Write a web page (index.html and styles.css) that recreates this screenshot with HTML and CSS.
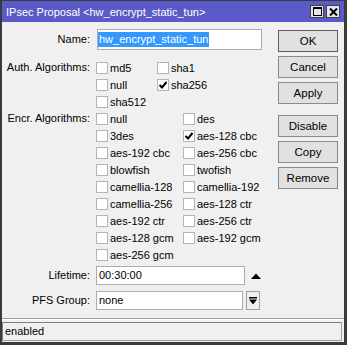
FILE: index.html
```html
<!DOCTYPE html>
<html>
<head>
<meta charset="utf-8">
<link rel="stylesheet" href="styles.css">
</head>
<body>
<div class="window">
  <div class="titlebar">
    <span class="title">IPsec Proposal &lt;hw_encrypt_static_tun&gt;</span>
    <div class="tbtns">
      <span class="tbtn"><svg width="9" height="9" viewBox="0 0 9 9"><rect x="0.5" y="0.5" width="8" height="8" fill="none" stroke="#000"/><rect x="0" y="0" width="9" height="2" fill="#000"/></svg></span>
      <span class="tbtn"><svg width="9" height="8" viewBox="0 0 9 8"><path d="M1 0.5 L8 7.5 M8 0.5 L1 7.5" stroke="#000" stroke-width="2"/></svg></span>
    </div>
  </div>
  <div class="main">
    <div class="form">
      <div class="row name-row">
        <span class="lbl">Name:</span>
        <div class="input name"><span class="sel">hw_encrypt_static_tun</span></div>
      </div>
      <div class="row chk-row auth-row">
        <span class="lbl">Auth. Algorithms:</span>
        <div class="checks auth">
          <div class="cb"><span class="box"></span>md5</div>
          <div class="cb"><span class="box"></span>sha1</div>
          <div class="cb"><span class="box"></span>null</div>
          <div class="cb"><span class="box"><svg width="10" height="10" viewBox="0 0 10 10"><path d="M1.5 5 L4 7.5 L8.5 2" fill="none" stroke="#000" stroke-width="2"/></svg></span>sha256</div>
          <div class="cb"><span class="box"></span>sha512</div>
        </div>
      </div>
      <div class="row chk-row">
        <span class="lbl">Encr. Algorithms:</span>
        <div class="checks encr">
          <div class="cb"><span class="box"></span>null</div>
          <div class="cb"><span class="box"></span>des</div>
          <div class="cb"><span class="box"></span>3des</div>
          <div class="cb"><span class="box"><svg width="10" height="10" viewBox="0 0 10 10"><path d="M1.5 5 L4 7.5 L8.5 2" fill="none" stroke="#000" stroke-width="2"/></svg></span>aes-128 cbc</div>
          <div class="cb"><span class="box"></span>aes-192 cbc</div>
          <div class="cb"><span class="box"></span>aes-256 cbc</div>
          <div class="cb"><span class="box"></span>blowfish</div>
          <div class="cb"><span class="box"></span>twofish</div>
          <div class="cb"><span class="box"></span>camellia-128</div>
          <div class="cb"><span class="box"></span>camellia-192</div>
          <div class="cb"><span class="box"></span>camellia-256</div>
          <div class="cb"><span class="box"></span>aes-128 ctr</div>
          <div class="cb"><span class="box"></span>aes-192 ctr</div>
          <div class="cb"><span class="box"></span>aes-256 ctr</div>
          <div class="cb"><span class="box"></span>aes-128 gcm</div>
          <div class="cb"><span class="box"></span>aes-192 gcm</div>
          <div class="cb"><span class="box"></span>aes-256 gcm</div>
        </div>
      </div>
      <div class="row field-row lifetime-row">
        <span class="lbl">Lifetime:</span>
        <div class="field">
          <div class="input lifetime">00:30:00</div>
          <svg class="up" width="10" height="6" viewBox="0 0 10 6"><path d="M0 6 L5 0.5 L10 6 Z" fill="#000"/></svg>
        </div>
      </div>
      <div class="row field-row pfs-row">
        <span class="lbl">PFS Group:</span>
        <div class="field">
          <div class="input pfs">none</div>
          <span class="dd"><svg width="8" height="8" viewBox="0 0 8 8"><rect x="0" y="0" width="8" height="1.5" fill="#000"/><path d="M0 2.5 L8 2.5 L4 7.5 Z" fill="#000"/></svg></span>
        </div>
      </div>
    </div>
    <div class="buttons">
      <div class="btn ok">OK</div>
      <div class="btn">Cancel</div>
      <div class="btn">Apply</div>
      <div class="btn group">Disable</div>
      <div class="btn">Copy</div>
      <div class="btn">Remove</div>
    </div>
  </div>
  <div class="sep"></div>
  <div class="status">enabled</div>
</div>
</body>
</html>
```

FILE: styles.css
```css
* { box-sizing: border-box; }
html, body { margin: 0; padding: 0; }
body {
  width: 347px;
  height: 345px;
  background: #fff;
  font-family: "Liberation Sans", Arial, sans-serif;
  font-size: 11px;
  color: #000;
}
.window {
  width: 347px;
  height: 345px;
  display: flex;
  flex-direction: column;
  background: #f0f0f0;
  border: 1px solid #3a3a3a;
  border-left-width: 2px;
  border-right-width: 3px;
  border-bottom-width: 3px;
}
.titlebar {
  height: 21px;
  flex: none;
  background: #5a5bc9;
  display: flex;
  align-items: center;
  padding-left: 4px;
  color: #fff;
  font-size: 11px;
}
.title { flex: 1; white-space: nowrap; }
.tbtns { display: flex; gap: 2px; margin-right: 4px; }
.tbtn {
  width: 14px;
  height: 13px;
  background: #e6e6e6;
  border: 1px solid #404040;
  display: flex;
  align-items: center;
  justify-content: center;
}
.main {
  flex: 1;
  display: flex;
  padding-top: 7px;
}
.form { flex: 1; }
.row {
  display: grid;
  grid-template-columns: 88px auto;
  column-gap: 6px;
  align-items: start;
}
.lbl { text-align: right; white-space: nowrap; }
.name-row .lbl { line-height: 21px; }
.input {
  background: #fff;
  border: 1px solid #abadb3;
  white-space: nowrap;
}
.name {
  margin-left: 1px;
  width: 165px;
  height: 21px;
  display: flex;
  align-items: center;
  padding-left: 0;
}
.sel {
  background: #3399ff;
  color: #fff;
  line-height: 15px;
  padding: 0 1px;
}
.auth-row { margin-top: 9px; }
.chk-row .lbl { line-height: 17px; }
.checks { display: grid; }
.auth { grid-template-columns: 61px auto; }
.encr { grid-template-columns: 87px auto; }
.cb {
  height: 17px;
  display: flex;
  align-items: center;
  gap: 2px;
  white-space: nowrap;
}
.box {
  width: 12px;
  height: 12px;
  background: #fff;
  border: 1px solid #b4b4b4;
  display: flex;
  align-items: center;
  justify-content: center;
  flex: none;
}
.field-row .lbl { line-height: 19px; }
.lifetime-row { margin-top: 3px; }
.pfs-row { margin-top: 6px; }
.field { display: flex; align-items: center; }
.lifetime, .pfs {
  height: 19px;
  line-height: 17px;
  padding-left: 2px;
}
.lifetime { width: 149px; }
.pfs { width: 147px; }
.up { margin-left: 6px; }
.dd {
  width: 14px;
  height: 19px;
  margin-left: 3px;
  border: 1px solid #a0a0a0;
  background: #f0f0f0;
  display: flex;
  align-items: center;
  justify-content: center;
}
.buttons {
  width: 60px;
  margin-right: 6px;
  display: flex;
  flex-direction: column;
  padding-top: 1px;
}
.btn {
  height: 22px;
  margin-bottom: 4px;
  background: #e1e1e1;
  border: 1px solid #8a8a8a;
  display: flex;
  align-items: center;
  justify-content: center;
  font-size: 11.5px;
}
.btn.ok { border-color: #5c5c5c; }
.btn.group { margin-top: 7px; }
.sep {
  height: 2px;
  flex: none;
  border-top: 1px solid #a0a0a0;
  border-bottom: 1px solid #fff;
}
.status {
  flex: none;
  height: 19px;
  margin: 2px 2px 1px 0;
  border: 1px solid #a0a0a0;
  border-top-color: #808080;
  border-left-color: #808080;
  line-height: 17px;
  padding-left: 2px;
}
```
